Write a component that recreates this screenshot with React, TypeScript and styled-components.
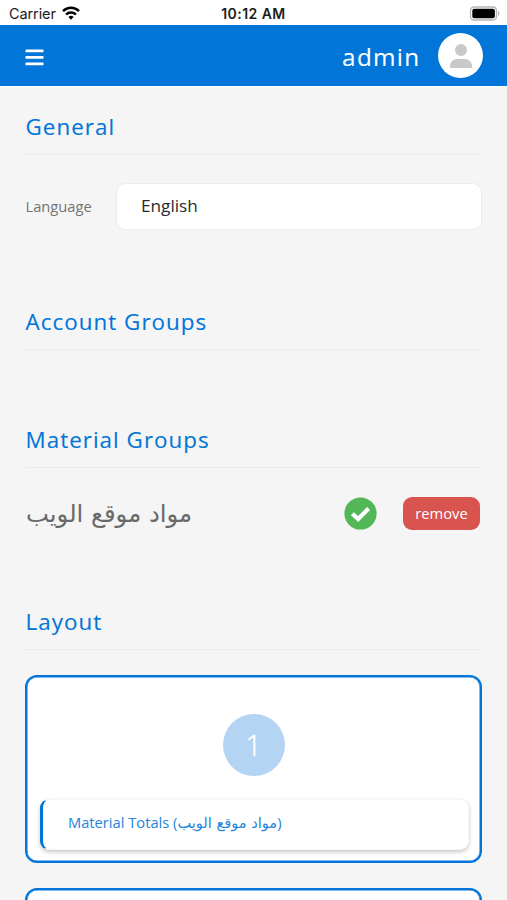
import React from "react";
import styled, { createGlobalStyle } from "styled-components";

const BLUE = "#0275d8";

const GlobalStyle = createGlobalStyle`
  * { box-sizing: border-box; }
  html, body { margin: 0; background: #f5f5f5; }
  body { font-family: "Open Sans", "Noto Sans", "DejaVu Sans", sans-serif; }
`;

const Screen = styled.div`
  width: 507px;
  height: 900px;
  overflow: hidden;
  background: #f5f5f5;
`;

const StatusBar = styled.div`
  display: grid;
  grid-template-columns: 1fr auto 1fr;
  align-items: center;
  height: 25px;
  padding: 2px 7px 0 9px;
  background: #fff;
  color: #1c1c1c;
  font: 14.5px/20px Inter, sans-serif;
`;

const Carrier = styled.div`
  display: flex;
  align-items: center;
  gap: 6px;
  letter-spacing: -0.1px;
  svg { margin-top: -2px; }
`;

const Clock = styled.div`
  margin-right: 2px;
  font-size: 14px;
  font-weight: 600;
  letter-spacing: 0.45px;
`;

const BatteryHolder = styled.div`
  display: flex;
  justify-content: flex-end;
  svg { margin-top: -1px; }
`;

const Header = styled.header`
  display: flex;
  align-items: center;
  height: 61px;
  padding: 0 24px 0 25px;
  background: ${BLUE};
  box-shadow: 0 1px 2px rgba(255, 255, 255, 0.9);
`;

const MenuButton = styled.button`
  display: block;
  margin: 4px auto 0 0;
  padding: 0;
  border: 0;
  background: none;
  line-height: 0;
`;

const UserName = styled.span`
  margin: 2px 17.5px 0 0;
  color: #fff;
  font-size: 24.3px;
  letter-spacing: 1.3px;
  -webkit-text-stroke: 0.1px #fff;
`;

const Avatar = styled.div`
  display: grid;
  place-items: center;
  width: 45px;
  height: 45px;
  border-radius: 50%;
  background: #fff;
`;

const Content = styled.main`
  padding: 28px 25px 0;
`;

const Section = styled.section<{ $height?: number }>`
  height: ${(p) => (p.$height ? `${p.$height}px` : "auto")};
`;

const SectionTitle = styled.h2`
  height: 41px;
  margin: 0 2px 0 0;
  padding-left: 0.5px;
  border-bottom: 1px solid #ebebeb;
  color: ${BLUE};
  font-size: 22.4px;
  font-weight: 400;
  line-height: 25px;
  letter-spacing: 1.03px;
  -webkit-text-stroke: 0.12px ${BLUE};
`;

const Field = styled.label`
  display: flex;
  align-items: center;
  justify-content: space-between;
  margin-top: 28px;
  color: #747474;
  font-size: 14.7px;
`;

const FieldName = styled.span`
  padding: 0 0 2px 0.5px;
`;

const Select = styled.div`
  width: 366px;
  height: 47px;
  padding-left: 24px;
  border: 1px solid #ececec;
  border-radius: 9px;
  background: #fff;
  color: #292b2c;
  font-size: 17.2px;
  line-height: 44px;
`;

const GroupRow = styled.div`
  display: flex;
  align-items: center;
  margin: 28px 2px 0 0;
  height: 34px;
`;

const GroupName = styled.span`
  margin: 0 auto 0 1px;
  color: #696969;
  font: 24.3px/33px "DejaVu Sans", sans-serif;
`;

const RemoveButton = styled.button`
  width: 77px;
  height: 33px;
  margin-left: 26px;
  padding: 0;
  border: 0;
  border-radius: 9px;
  background: #d9534f;
  color: #fff;
  font: 14.7px/33px "Open Sans", sans-serif;
`;

const LayoutCard = styled.article`
  height: 188px;
  margin-top: 25px;
  padding: 37px 11px 0 13px;
  border: 2px solid ${BLUE};
  border-radius: 12px;
  background: #fff;
  box-shadow: inset 0 0 0 0.5px ${BLUE};
`;

const StepCircle = styled.div`
  width: 62px;
  height: 62px;
  margin: 0 auto 23px;
  transform: translateX(-1px);
  border-radius: 50%;
  background: #b3d5f3;
  color: #fff;
  font: 300 29px/62px "Open Sans", sans-serif;
  text-align: center;
  -webkit-text-stroke: 0.4px #fff;
`;

const Widget = styled.div`
  height: 51px;
  padding-left: 25px;
  border: 1px solid #f5f5f5;
  border-left: 3px solid ${BLUE};
  border-radius: 9px;
  background: #fff;
  box-shadow: 0 2px 4px rgba(0, 0, 0, 0.22);
  color: #2583da;
  font-size: 14.7px;
  line-height: 44px;
  white-space: nowrap;
`;

const WidgetGroup = styled.span`
  font-family: "DejaVu Sans", sans-serif;
  font-size: 14.6px;
  line-height: 1;
`;

const MenuIcon = () => (
  <svg width="19" height="17" viewBox="0 0 19 17" fill="#fff">
    <rect x="0.5" y="0.5" width="18" height="2.8" rx="0.6" />
    <rect x="0.5" y="7" width="18" height="2.8" rx="0.6" />
    <rect x="0.5" y="13.5" width="18" height="2.8" rx="0.6" />
  </svg>
);

const WifiIcon = () => (
  <svg width="18" height="14" viewBox="0 0 18 14" fill="none" stroke="#000" strokeWidth="2.4">
    <path d="M1 5.1a11.4 11.4 0 0 1 16 0" />
    <path d="M4 8.5a7.1 7.1 0 0 1 10 0" />
    <path d="M6.4 11a3.7 3.7 0 0 1 5.2 0L9 13.7Z" fill="#000" stroke="none" />
  </svg>
);

const BatteryIcon = () => (
  <svg width="31" height="15" viewBox="0 0 31 15">
    <rect x="1.5" y="1" width="26" height="13" rx="3.6" fill="#fff" stroke="#b5b5b5" strokeWidth="1.3" />
    <rect x="3.3" y="2.8" width="22.6" height="9.4" rx="2" fill="#000" />
    <path d="M29 5c2 .8 2 4.2 0 5Z" fill="#b5b5b5" />
  </svg>
);

const PersonIcon = () => (
  <svg width="22" height="24" viewBox="0 0 22 24" fill="#c9c9c9">
    <circle cx="11" cy="6" r="6" />
    <path d="M0 24v-1.5c0-5 3.5-7.5 7.5-7.5h7c4 0 7.5 2.5 7.5 7.5v1.5Z" />
  </svg>
);

const CheckIcon = () => (
  <svg width="33" height="33" viewBox="0 0 33 33">
    <circle cx="16.5" cy="16.5" r="16.1" fill="#52b857" />
    <path d="m8.4 16.7 5.7 5.4 10.5-10.6" fill="none" stroke="#fff" strokeWidth="4.2" />
  </svg>
);

export default function App() {
  return (
    <Screen>
      <GlobalStyle />
      <StatusBar>
        <Carrier>Carrier <WifiIcon /></Carrier>
        <Clock>10:12 AM</Clock>
        <BatteryHolder><BatteryIcon /></BatteryHolder>
      </StatusBar>
      <Header>
        <MenuButton aria-label="Menu"><MenuIcon /></MenuButton>
        <UserName>admin</UserName>
        <Avatar><PersonIcon /></Avatar>
      </Header>
      <Content>
        <Section $height={194.5}>
          <SectionTitle>General</SectionTitle>
          <Field><FieldName>Language</FieldName><Select>English</Select></Field>
        </Section>
        <Section $height={118.5}>
          <SectionTitle>Account Groups</SectionTitle>
        </Section>
        <Section $height={182}>
          <SectionTitle>Material Groups</SectionTitle>
          <GroupRow>
            <GroupName dir="rtl">مواد موقع الويب</GroupName>
            <CheckIcon />
            <RemoveButton>remove</RemoveButton>
          </GroupRow>
        </Section>
        <Section>
          <SectionTitle>Layout</SectionTitle>
          <LayoutCard>
            <StepCircle>1</StepCircle>
            <Widget>Material Totals (<WidgetGroup>مواد موقع الويب</WidgetGroup>)</Widget>
          </LayoutCard>
          <LayoutCard />
        </Section>
      </Content>
    </Screen>
  );
}
